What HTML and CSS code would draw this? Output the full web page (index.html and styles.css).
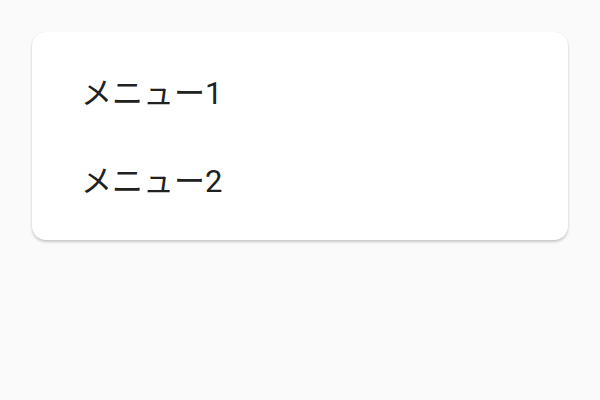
FILE: index.html
```html
<!DOCTYPE html>
<html lang="ja">
<head>
<meta charset="utf-8">
<link rel="stylesheet" href="styles.css">
</head>
<body>
<ul class="menu">
  <li class="menu-item">メニュー1</li>
  <li class="menu-item">メニュー2</li>
</ul>
</body>
</html>
```
FILE: styles.css
```css
html, body {
  margin: 0;
  background: #fafafa;
}
body {
  padding: 32px;
  font-family: Roboto, "Noto Sans CJK JP", sans-serif;
}
.menu {
  list-style: none;
  margin: 0;
  padding: 14px 0 18px;
  background: #fff;
  border-radius: 14px;
  box-shadow: 0 2px 3px rgba(0,0,0,0.2), 0 0 1px rgba(0,0,0,0.06);
}
.menu-item {
  height: 88px;
  display: flex;
  align-items: center;
  padding-left: 49px;
  font-size: 31px;
  color: #212121;
}
```
